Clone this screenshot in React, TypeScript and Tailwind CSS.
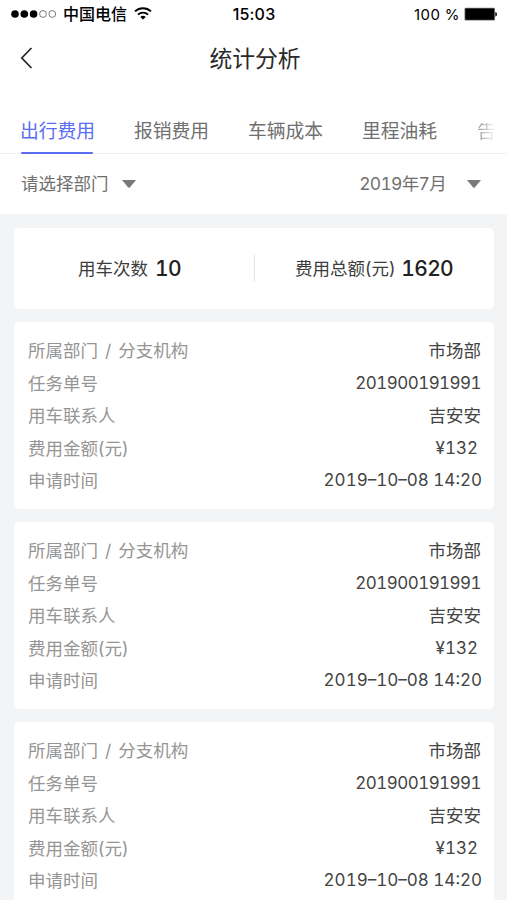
import React from "react";

const TABS = ["出行费用", "报销费用", "车辆成本", "里程油耗"];

const RECORD = [
  { label: "所属部门 / 分支机构", value: "市场部", valueClass: "" },
  { label: "任务单号", value: "201900191991", valueClass: "text-[17px] tabular-nums tracking-[-0.55px]" },
  { label: "用车联系人", value: "吉安安", valueClass: "" },
  { label: "费用金额(元)", value: "¥132", valueClass: "text-[17px] tabular-nums mr-[3px]" },
  { label: "申请时间", value: "2019–10–08 14:20", valueClass: "text-[17px] tabular-nums -mr-[1px]" },
];

const RECORDS = [RECORD, RECORD, RECORD];

function StatusBar() {
  return (
    <div className="flex h-7 items-center justify-between pr-[10px] pl-[11px] text-black">
      <div className="flex w-[180px] items-center">
        <svg width="46" height="10" viewBox="0 0 46 10">
          <circle cx="4" cy="5" r="3.8" />
          <circle cx="13.3" cy="5" r="3.8" />
          <circle cx="22.6" cy="5" r="3.8" />
          <circle cx="32" cy="5" r="3.4" fill="none" stroke="#444" strokeWidth="0.7" />
          <circle cx="41.3" cy="5" r="3.4" fill="none" stroke="#444" strokeWidth="0.7" />
        </svg>
        <span className="ml-[6px] text-[16px] leading-7 font-medium whitespace-nowrap">中国电信</span>
        <svg className="mb-[2px] ml-[7px]" width="18" height="13" viewBox="0 0 18 13" fill="none" stroke="#000">
          <path d="M1 4.4C5.5 0.1 12.5 0.1 17 4.4" strokeWidth="1.9" />
          <path d="M3.9 7.6C6.8 4.9 11.2 4.9 14.1 7.6" strokeWidth="1.8" />
          <path d="M6.3 9.9C7.8 8.5 10.2 8.5 11.7 9.9L9 12.6Z" fill="#000" stroke="none" />
        </svg>
      </div>
      <span className="text-[16px] font-medium tracking-[0.2px]">15:03</span>
      <div className="flex w-[180px] items-center justify-end">
        <span className="text-[15px] tracking-[0.4px] whitespace-nowrap">100 %</span>
        <svg className="mb-px ml-[4px]" width="33" height="14" viewBox="0 0 33 14">
          <rect x="0.5" y="0.8" width="30.5" height="12.8" rx="1" fill="#777" />
          <rect x="1.3" y="1.6" width="28.9" height="11.2" rx="0.6" />
          <path d="M31.3 5c2.2.4 2.2 4.3 0 4.8z" />
        </svg>
      </div>
    </div>
  );
}

function Caret() {
  return (
    <svg width="14" height="8" viewBox="0 0 14 8" fill="#7a7a7a">
      <path d="M0 0h14L7.8 7.4q-.8.8-1.6 0z" />
    </svg>
  );
}

function RecordCard({ rows }: { rows: typeof RECORD }) {
  return (
    <section className="h-[187px] shrink-0 rounded-[5px] bg-white pt-[13px] pr-[13px] pl-[14px]">
      {rows.map((row) => (
        <div key={row.label} className="flex h-[32.4px] items-center justify-between text-[17.5px]">
          <span className="text-[#959595] [word-spacing:2px]">{row.label}</span>
          <span className={`text-[#444] ${row.valueClass}`}>{row.value}</span>
        </div>
      ))}
    </section>
  );
}

export default function App() {
  return (
    <div className="flex h-[900px] w-[507px] flex-col overflow-hidden bg-[#f3f4f5] font-['Inter','Noto_Sans_CJK_SC',sans-serif] leading-none">
      <header className="shrink-0 bg-white">
        <StatusBar />
        <div className="grid h-[60px] grid-cols-[60px_1fr_57px] items-center">
          <svg className="ml-[20px]" width="13" height="22" viewBox="0 0 13 22" fill="none" stroke="#222" strokeWidth="1.7">
            <path d="M11.5 1L1.8 11l9.7 10" />
          </svg>
          <h1 className="pt-[3px] text-center text-[22.8px] text-[#2a2a2a]">统计分析</h1>
        </div>
        <nav className="flex h-[66px] items-end gap-[39px] border-b border-[#f0f0f0] pl-[20px] text-[18.8px] text-[#707070]">
          {TABS.map((tab, i) => (
            <div
              key={tab}
              className={
                i === 0
                  ? "flex h-[30px] w-[75px] flex-col justify-between whitespace-nowrap text-[#5b6df0]"
                  : "h-[30px] w-[75px] whitespace-nowrap"
              }
            >
              {tab}
              {i === 0 && <span className="-mb-px ml-px h-[2px] w-[72px] shrink-0 rounded-full bg-[#5b6df0]" />}
            </div>
          ))}
          <span className="ml-px h-[30px] bg-linear-to-r from-[#999] to-white bg-clip-text text-transparent">告</span>
        </nav>
        <div className="flex h-[60px] items-center justify-between pr-[26px] pl-[21px] text-[17.5px] text-[#707070]">
          <div className="flex items-center gap-[13px]">
            请选择部门
            <Caret />
          </div>
          <div className="flex items-center gap-[21px]">
            <span className="tracking-[-0.7px] tabular-nums">2019年7月</span>
            <Caret />
          </div>
        </div>
      </header>

      <main className="flex min-h-0 flex-1 flex-col gap-[13px] pt-[14px] pr-[13px] pl-[14px]">
        <section className="flex h-[81px] shrink-0 items-center rounded-[5px] bg-white text-[17.5px] text-[#3d3d3d]">
          <div className="flex w-[240px] items-center justify-center gap-[7px] pr-[9px]">
            用车次数
            <b className="text-[21px] font-medium tracking-[-0.5px] text-[#222] tabular-nums">10</b>
          </div>
          <div className="h-[27px] w-px bg-[#e2e2e2]" />
          <div className="flex flex-1 items-center justify-center gap-[6px] pr-px">
            费用总额(元)
            <b className="text-[21px] font-medium tracking-[-0.7px] text-[#222] tabular-nums">1620</b>
          </div>
        </section>
        {RECORDS.map((rows, i) => (
          <RecordCard key={i} rows={rows} />
        ))}
      </main>
    </div>
  );
}
